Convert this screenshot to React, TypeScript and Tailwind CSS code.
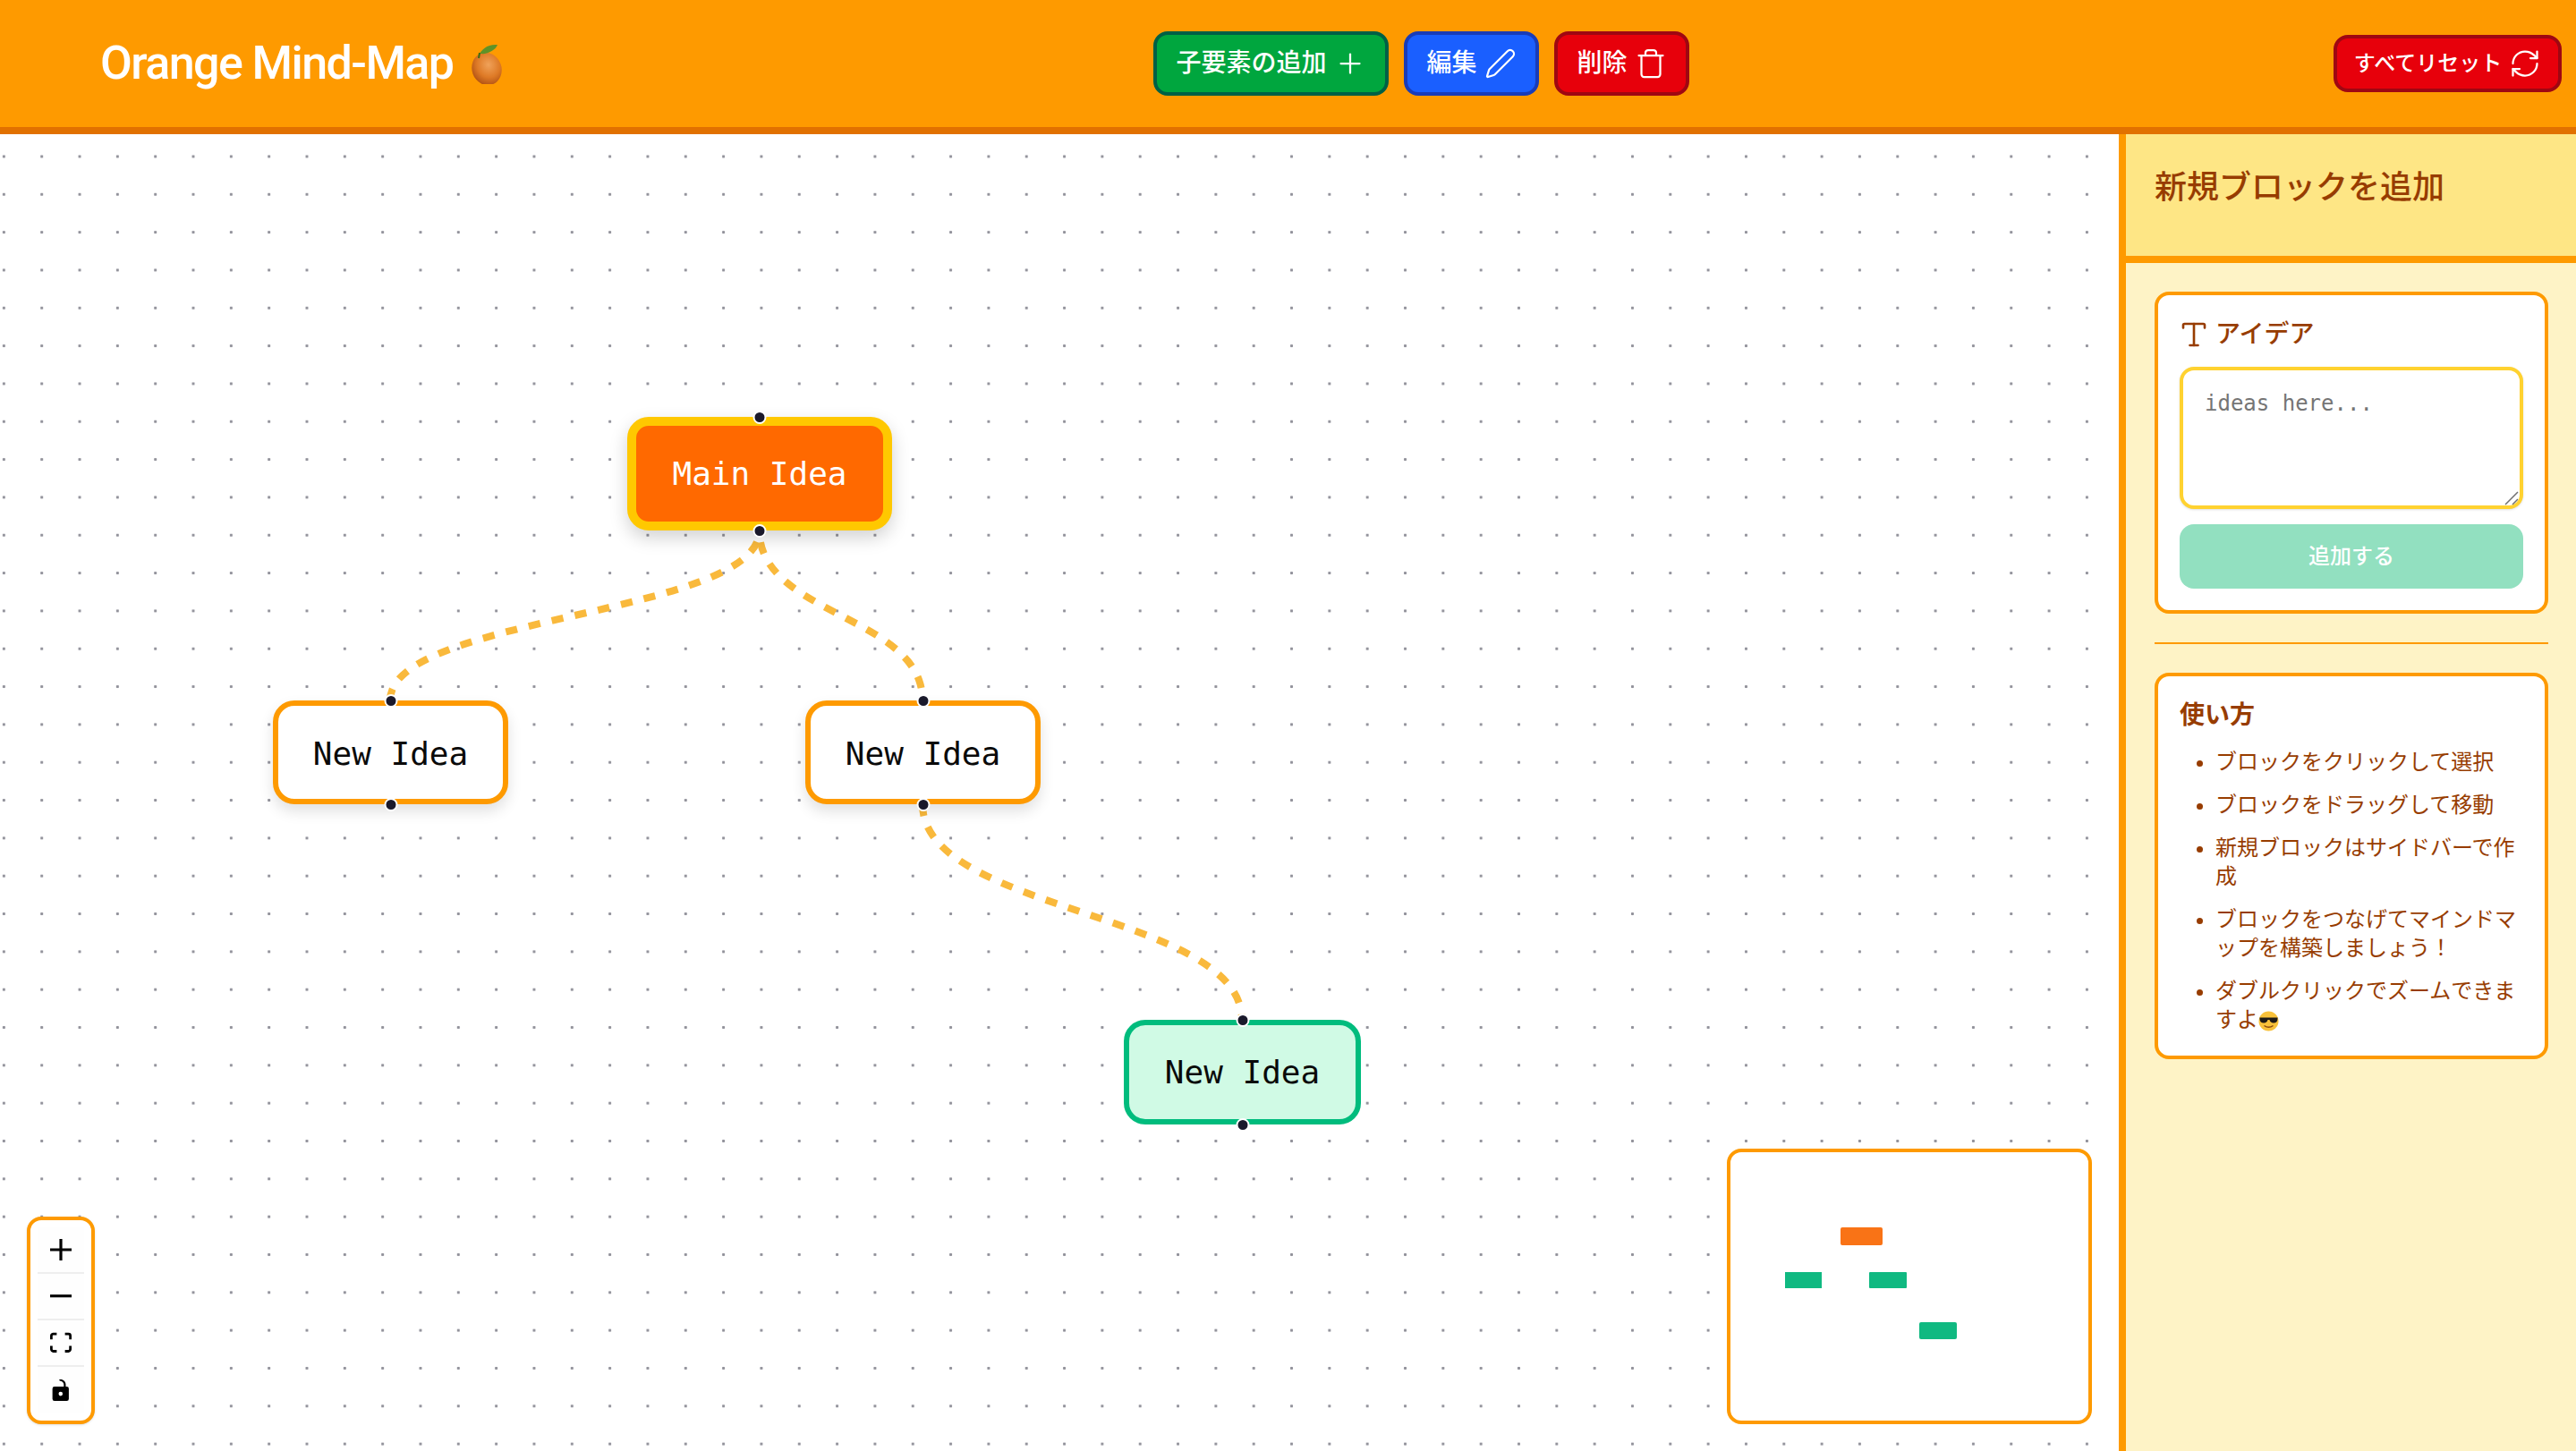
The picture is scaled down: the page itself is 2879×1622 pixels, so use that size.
import React from 'react';
import { Plus, Pen, Trash, RefreshCw, Type } from 'lucide-react';

const sans = "font-['Liberation_Sans','Noto_Sans_CJK_JP',sans-serif]";

function OrangeEmoji() {
  return (
    <svg width="38" height="46" viewBox="0 0 38 46" className="shrink-0">
      <defs>
        <radialGradient id="orangeBody" cx="0.4" cy="0.4" r="0.7">
          <stop offset="0" stopColor="#f0a25a" />
          <stop offset="0.55" stopColor="#de7a26" />
          <stop offset="1" stopColor="#a84a10" />
        </radialGradient>
      </defs>
      <ellipse cx="19" cy="29" rx="18.5" ry="16.5" transform="rotate(70 19 29)" fill="url(#orangeBody)" />
      <path d="M10 14 C 13 7, 20 1, 31 2 C 29 8, 20 13, 12 12 Z" fill="#5f9228" />
      <path d="M10 17 L11 11" stroke="#3d6a14" strokeWidth="2" />
    </svg>
  );
}

function CoolEmoji() {
  return (
    <svg width="23" height="23" viewBox="0 0 23 23" className="inline-block align-[-5px]">
      <circle cx="11.5" cy="11.5" r="11" fill="#f8c13a" />
      <path d="M1.5 7.5 h20 v1.5 c0 3 -2 4.5 -4.5 4.5 c-2.5 0 -4 -1.5 -4.5 -3.5 h-2 c-.5 2 -2 3.5 -4.5 3.5 c-2.5 0 -4.5 -1.5 -4.5 -4.5z" fill="#1f1b16" />
      <path d="M6.5 16.5 q5 3.5 10 0" stroke="#8a4a10" strokeWidth="1.5" fill="none" />
    </svg>
  );
}

function Handle({ className }: { className: string }) {
  return (
    <span className={`absolute left-1/2 -translate-x-1/2 w-[15px] h-[15px] rounded-full bg-[#1a192b] border-2 border-white ${className}`} />
  );
}

function IdeaNode({ label, className, topHandle, bottomHandle }: { label: string; className: string; topHandle: string; bottomHandle: string }) {
  return (
    <div className={`absolute flex items-center justify-center rounded-3xl font-['DejaVu_Sans_Mono',monospace] text-[36px] ${className}`}>
      {label}
      <Handle className={topHandle} />
      <Handle className={bottomHandle} />
    </div>
  );
}

function Edges() {
  const props = { fill: 'none', stroke: '#f9b93c', strokeWidth: 8, strokeDasharray: '13.2' };
  return (
    <svg className="absolute inset-0 w-full h-full pointer-events-none">
      <path d="M848.7 443 C848.7 538 436 538 436 633" {...props} strokeDashoffset="13.2" />
      <path d="M848.7 443 C848.7 538 1031 538 1031 633" {...props} strokeDashoffset="13.2" />
      <path d="M1031 749 C1031 870 1388 870 1388 990" {...props} />
    </svg>
  );
}

function Controls() {
  const rowClass = 'h-[52px] w-[52px] flex items-center justify-center bg-[#fefefe] border-b-2 border-[#eeeeee]';
  return (
    <div className="absolute left-[30px] bottom-[30px] flex flex-col p-2 pr-2 bg-white border-4 border-amber-500 rounded-2xl shadow-sm">
      <button className={rowClass}>
        <svg viewBox="0 0 32 32" className="w-6 h-6"><path d="M32 18.133H18.133V32h-4.266V18.133H0v-4.266h13.867V0h4.266v13.867H32z" /></svg>
      </button>
      <button className={rowClass}>
        <svg viewBox="0 0 32 5" className="w-6 h-[4px]"><path d="M0 0h32v4.2H0z" /></svg>
      </button>
      <button className={rowClass}>
        <svg viewBox="0 0 32 30" className="w-6 h-6"><path d="M3.692 4.63c0-.53.4-.938.939-.938h5.215V0H4.708C2.13 0 0 2.054 0 4.63v5.216h3.692V4.631zM27.354 0h-5.2v3.692h5.17c.53 0 .984.4.984.939v5.215H32V4.631A4.624 4.624 0 0027.354 0zm.954 24.83c0 .532-.4.94-.939.94h-5.215v3.768h5.215c2.577 0 4.631-2.13 4.631-4.707v-5.139h-3.692v5.139zm-23.677.94c-.531 0-.939-.4-.939-.94v-5.138H0v5.139c0 2.577 2.13 4.707 4.708 4.707h5.138V25.77H4.631z" /></svg>
      </button>
      <button className="h-[52px] w-[52px] flex items-center justify-center bg-[#fefefe]">
        <svg viewBox="0 0 25 32" className="w-6 h-6"><path d="M21.333 10.667H19.81V7.619C19.81 3.429 16.38 0 12.19 0c-4.114 0-1.37 2.133.305 2.438 1.676.305 4.42 2.59 4.42 5.181v3.048H3.047A3.056 3.056 0 000 13.714v15.238A3.056 3.056 0 003.048 32h18.285a3.056 3.056 0 003.048-3.048V13.714a3.056 3.056 0 00-3.048-3.047zM12.19 24.533a3.056 3.056 0 01-3.047-3.047 3.056 3.056 0 013.047-3.048 3.056 3.056 0 013.048 3.048 3.056 3.056 0 01-3.048 3.047z" /></svg>
      </button>
    </div>
  );
}

function MiniMap() {
  return (
    <div className="absolute right-[30px] bottom-[30px] w-[408px] h-[308px] bg-white border-4 border-amber-500 rounded-2xl overflow-hidden">
      <svg viewBox="1934 1288 400 300" className="w-full h-full">
        <rect x="2057" y="1372" width="47" height="20" rx="2" fill="#f97316" />
        <rect x="1995" y="1422" width="41" height="18" fill="#10b981" />
        <rect x="2089" y="1422" width="42" height="18" rx="1" fill="#10b981" />
        <rect x="2145" y="1478" width="42" height="19" rx="2" fill="#10b981" />
      </svg>
    </div>
  );
}

export default function App() {
  const tips = [
    'ブロックをクリックして選択',
    'ブロックをドラッグして移動',
    '新規ブロックはサイドバーで作成',
    'ブロックをつなげてマインドマップを構築しましょう！',
  ];

  return (
    <div className={`h-screen flex flex-col overflow-hidden ${sans}`}>
      <header className="h-[150px] shrink-0 flex items-center justify-between pl-[112px] pr-4 pb-[1px] bg-amber-500 border-b-8 border-amber-600">
        <div className="flex items-center gap-[18px] w-[457px]">
          <h1 className="font-['Roboto',sans-serif] font-medium text-[52px] leading-none tracking-[-0.03em] text-white whitespace-nowrap">Orange Mind-Map</h1>
          <OrangeEmoji />
        </div>
        <div className="flex items-center gap-[17px]">
          <button className="h-[72px] w-[263px] flex items-center justify-center gap-2 rounded-2xl bg-green-600 border-4 border-emerald-800 text-white text-[28px] font-medium">
            子要素の追加 <Plus size={36} strokeWidth={1.5} />
          </button>
          <button className="h-[72px] w-[151px] flex items-center justify-center gap-2 rounded-2xl bg-[#1a5fff] border-4 border-blue-800 text-white text-[28px] font-medium">
            編集 <Pen size={36} strokeWidth={1.5} />
          </button>
          <button className="h-[72px] w-[151px] flex items-center justify-center gap-2 rounded-2xl bg-red-600 border-4 border-red-800 text-white text-[28px] font-medium">
            削除 <Trash size={36} strokeWidth={1.5} />
          </button>
        </div>
        <button className="h-16 w-[255px] flex items-center justify-center gap-2 rounded-2xl bg-red-600 border-4 border-red-800 text-white text-2xl font-medium">
          すべてリセット <RefreshCw size={36} strokeWidth={1.5} />
        </button>
      </header>

      <div className="flex-1 flex min-h-0">
        <main className="flex-1 relative bg-white bg-[radial-gradient(circle,#91919a_1.3px,transparent_2px)] bg-[size:42.33px_42.33px] bg-[position:-16.8px_3.8px]">
          <Edges />
          <IdeaNode
            label="Main Idea"
            className="left-[701px] top-[316px] w-[296px] h-[127px] bg-[#ff6900] border-[10px] border-[#ffc800] text-white shadow-[0_8px_20px_rgba(0,0,0,0.18)]"
            topHandle="-top-[17.5px]"
            bottomHandle="-bottom-[17.5px]"
          />
          <IdeaNode
            label="New Idea"
            className="left-[305px] top-[633px] w-[263px] h-[116px] pt-[3px] bg-white border-[6px] border-amber-500 text-[#0a0a0a] shadow-[0_8px_16px_rgba(0,0,0,0.12)]"
            topHandle="-top-[13.5px]"
            bottomHandle="-bottom-[13.5px]"
          />
          <IdeaNode
            label="New Idea"
            className="left-[900px] top-[633px] w-[263px] h-[116px] pt-[3px] bg-white border-[6px] border-amber-500 text-[#0a0a0a] shadow-[0_8px_16px_rgba(0,0,0,0.12)]"
            topHandle="-top-[13.5px]"
            bottomHandle="-bottom-[13.5px]"
          />
          <IdeaNode
            label="New Idea"
            className="left-[1256px] top-[990px] w-[265px] h-[117px] bg-emerald-100 border-[6px] border-emerald-500 text-[#0a0a0a]"
            topHandle="-top-[13.5px]"
            bottomHandle="-bottom-[13.5px]"
          />
          <Controls />
          <MiniMap />
        </main>

        <aside className="w-[511px] shrink-0 flex flex-col bg-amber-100 border-l-8 border-amber-500 text-amber-800">
          <div className="h-[144px] shrink-0 flex items-center pl-8 pb-4 bg-amber-200 border-b-8 border-amber-500">
            <h2 className="text-4xl font-medium">新規ブロックを追加</h2>
          </div>
          <div className="flex flex-col gap-8 pt-8 pl-8 pr-[31px]">
            <div className="h-[360px] flex flex-col p-6 pt-7 bg-white border-4 border-amber-500 rounded-2xl">
              <label className="h-8 flex items-center gap-[6px] text-[28px] font-medium">
                <Type size={36} strokeWidth={1.75} className="-ml-0.5" /> アイデア
              </label>
              <div className="relative mt-5">
                <textarea
                  placeholder="ideas here..."
                  className="block h-[159px] w-full px-6 pt-[21px] pb-5 bg-white border-4 border-amber-300 rounded-2xl font-['DejaVu_Sans_Mono',monospace] text-2xl leading-8 placeholder:text-[#757575] shadow-sm outline-none resize-none"
                />
                <svg width="16" height="16" viewBox="0 0 16 16" className="absolute right-[5px] bottom-[4px]">
                  <path d="M1 15 L15 1 M9 15 L15 9" stroke="#707070" strokeWidth="1.5" />
                </svg>
              </div>
              <button className="mt-[17px] h-[72px] shrink-0 rounded-2xl bg-[#92e0c0] text-white text-2xl font-medium">追加する</button>
            </div>
            <div className="h-0.5 bg-amber-500" />
            <div className="h-[432px] p-6 pt-[26px] bg-white border-4 border-amber-500 rounded-2xl">
              <h3 className="text-[28px] leading-9 font-bold">使い方</h3>
              <ul className="mt-[18px] pl-10 list-disc space-y-4 text-2xl leading-8 [line-break:anywhere]">
                {tips.map(t => <li key={t}>{t}</li>)}
                <li>ダブルクリックでズームできますよ<CoolEmoji /></li>
              </ul>
            </div>
          </div>
        </aside>
      </div>
    </div>
  );
}
